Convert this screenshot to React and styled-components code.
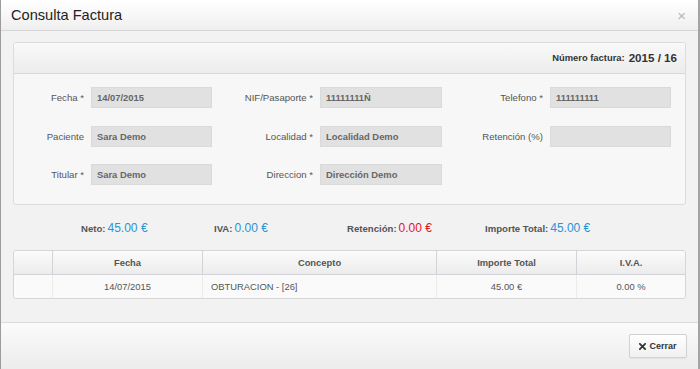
import React from "react";
import styled, { createGlobalStyle } from "styled-components";

const Global = createGlobalStyle`
  html, body { margin: 0; padding: 0; background: #fff; }
  body { font-family: "Liberation Sans", Arial, Helvetica, sans-serif; }
  * { box-sizing: border-box; }
`;

const Modal = styled.div`
  width: 700px;
  height: 369px;
  display: flex;
  flex-direction: column;
  border-left: 1px solid #9c9c9c;
  border-right: 2px solid #a4a4a4;
  background: #f2f2f2;
  overflow: hidden;
`;

const Header = styled.div`
  height: 31px;
  flex: none;
  display: flex;
  align-items: center;
  justify-content: space-between;
  padding: 0 12px 1px 10px;
  background: linear-gradient(#ffffff, #efefef);
  border-bottom: 1px solid #d6d6d6;
`;

const Title = styled.h3`
  margin: 0;
  font-size: 14.6px;
  font-weight: normal;
  color: #222;
`;

const CloseX = styled.span`
  font-size: 15px;
  color: #b5b5b5;
  line-height: 1;
  margin-top: 2px;
`;

const Body = styled.div`
  flex: 1;
  padding: 11px 12px 0 12px;
  display: flex;
  flex-direction: column;
`;

const Panel = styled.div`
  border: 1px solid #dcdcdc;
  border-radius: 3px;
  background: #f7f7f7;
  overflow: hidden;
`;

const PanelHead = styled.div`
  height: 31px;
  display: flex;
  align-items: center;
  justify-content: flex-end;
  padding: 0 8px 2px 0;
  background: linear-gradient(#f9f9f9, #ececec);
  border-bottom: 1px solid #d8d8d8;
  font-size: 9.4px;
  font-weight: bold;
  color: #333;
`;

const InvoiceNo = styled.span`
  font-size: 11.6px;
  margin-left: 4px;
  color: #333;
`;

const FormGrid = styled.div`
  display: grid;
  grid-template-columns: 70px 121px 94px 122px 94px 121px;
  column-gap: 7px;
  row-gap: 17.5px;
  align-items: center;
  padding: 13px 14px 19px 0;
`;

const Label = styled.label`
  text-align: right;
  font-size: 9.6px;
  color: #555;
`;

const Field = styled.div`
  height: 21px;
  background: #e1e1e1;
  border: 1px solid #dadada;
  padding: 0 5px;
  display: flex;
  align-items: center;
  font-size: 9.4px;
  font-weight: bold;
  color: #666;
`;

const Totals = styled.div`
  display: grid;
  grid-template-columns: 133px 133px 138px auto;
  padding: 0 0 0 68px;
  height: 45px;
  align-items: center;
`;

const TotalItem = styled.div`
  font-size: 9.6px;
  font-weight: bold;
  color: #555;
  white-space: nowrap;
`;

const Amount = styled.span`
  font-size: 12px;
  font-weight: normal;
  color: ${(p) => (p.$red ? "#e0161b" : "#2a93d5")};
  margin-left: 2px;
`;

const Table = styled.table`
  width: 100%;
  border-collapse: separate;
  border-spacing: 0;
  border: 1px solid #d6d6d6;
  border-radius: 3px;
  overflow: hidden;
  font-size: 9.4px;
  color: #555;
`;

const Th = styled.th`
  height: 24px;
  padding: 0;
  font-weight: bold;
  color: #555;
  background: linear-gradient(#fbfbfb, #ececec);
  border-bottom: 1px solid #d2d2d9;
  border-left: ${(p) => (p.$first ? "none" : "1px solid #d2d2d9")};
  width: ${(p) => p.$w}px;
`;

const Td = styled.td`
  height: 23px;
  padding: 0 ${(p) => (p.$left ? "8px" : "0")};
  text-align: ${(p) => (p.$left ? "left" : "center")};
  background: #fafafa;
  border-left: ${(p) => (p.$first ? "none" : "1px solid #ececec")};
`;

const Footer = styled.div`
  height: 47px;
  flex: none;
  display: flex;
  align-items: flex-start;
  justify-content: flex-end;
  padding: 11px 11px 0 0;
  border-top: 1px solid #dcdcdc;
  background: linear-gradient(#fbfbfb, #ececec);
`;

const Button = styled.button`
  width: 58px;
  height: 24px;
  display: flex;
  align-items: center;
  justify-content: center;
  gap: 3px;
  border: 1px solid #d2d2d2;
  border-radius: 2px;
  background: linear-gradient(#ffffff, #f0f0f0);
  box-shadow: 0 1px 1px rgba(0, 0, 0, 0.06);
  font-family: inherit;
  font-size: 9px;
  font-weight: bold;
  color: #333;
  padding: 0;
`;

const fields = [
  ["Fecha *", "14/07/2015", "NIF/Pasaporte *", "11111111Ñ", "Telefono *", "111111111"],
  ["Paciente", "Sara Demo", "Localidad *", "Localidad Demo", "Retención (%)", ""],
  ["Titular *", "Sara Demo", "Direccion *", "Dirección Demo", null, null],
];

export default function App() {
  return (
    <>
      <Global />
      <Modal>
        <Header>
          <Title>Consulta Factura</Title>
          <CloseX>×</CloseX>
        </Header>
        <Body>
          <Panel>
            <PanelHead>
              Número factura:<InvoiceNo>2015 / 16</InvoiceNo>
            </PanelHead>
            <FormGrid>
              {fields.map((row, i) => (
                <React.Fragment key={i}>
                  {[0, 2, 4].map((j) =>
                    row[j] === null ? (
                      <React.Fragment key={j}>
                        <span />
                        <span />
                      </React.Fragment>
                    ) : (
                      <React.Fragment key={j}>
                        <Label>{row[j]}</Label>
                        <Field>{row[j + 1]}</Field>
                      </React.Fragment>
                    )
                  )}
                </React.Fragment>
              ))}
            </FormGrid>
          </Panel>
          <Totals>
            <TotalItem>
              Neto:<Amount>45.00 €</Amount>
            </TotalItem>
            <TotalItem>
              IVA:<Amount>0.00 €</Amount>
            </TotalItem>
            <TotalItem>
              Retención:<Amount $red>0.00 €</Amount>
            </TotalItem>
            <TotalItem>
              Importe Total:<Amount>45.00 €</Amount>
            </TotalItem>
          </Totals>
          <Table>
            <thead>
              <tr>
                <Th $first $w={38}></Th>
                <Th $w={150}>Fecha</Th>
                <Th $w={234}>Concepto</Th>
                <Th $w={140}>Importe Total</Th>
                <Th>I.V.A.</Th>
              </tr>
            </thead>
            <tbody>
              <tr>
                <Td $first></Td>
                <Td>14/07/2015</Td>
                <Td $left>OBTURACION - [26]</Td>
                <Td>45.00 €</Td>
                <Td>0.00 %</Td>
              </tr>
            </tbody>
          </Table>
        </Body>
        <Footer>
          <Button>
            <svg width="7" height="7" viewBox="0 0 8 8">
              <path d="M1 1 L7 7 M7 1 L1 7" stroke="#333" strokeWidth="2" strokeLinecap="square" />
            </svg>
            Cerrar
          </Button>
        </Footer>
      </Modal>
    </>
  );
}
